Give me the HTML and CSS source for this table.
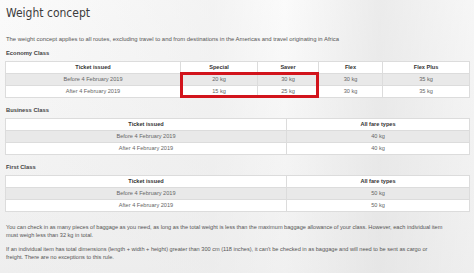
FILE: index.html
```html
<!DOCTYPE html>
<html>
<head>
<meta charset="utf-8">
<link rel="stylesheet" href="styles.css">
</head>
<body>
<div class="page">
  <h1 class="title">Weight concept</h1>
  <p class="intro">The weight concept applies to all routes, excluding travel to and from destinations in the Americas and travel originating in Africa</p>

  <div class="section-label first">Economy Class</div>
  <div class="table-wrap">
    <table class="fares economy">
      <colgroup>
        <col class="c-ticket"><col class="c-special"><col class="c-saver"><col class="c-flex"><col class="c-flexplus">
      </colgroup>
      <thead>
        <tr><th>Ticket issued</th><th>Special</th><th>Saver</th><th>Flex</th><th>Flex Plus</th></tr>
      </thead>
      <tbody>
        <tr class="alt"><td>Before 4 February 2019</td><td>20 kg</td><td>30 kg</td><td>30 kg</td><td>35 kg</td></tr>
        <tr><td>After 4 February 2019</td><td>15 kg</td><td>25 kg</td><td>30 kg</td><td>35 kg</td></tr>
      </tbody>
    </table>
    <div class="highlight"></div>
  </div>

  <div class="section-label">Business Class</div>
  <table class="fares two">
    <colgroup><col class="c-left"><col></colgroup>
    <thead><tr><th>Ticket issued</th><th>All fare types</th></tr></thead>
    <tbody>
      <tr class="alt"><td>Before 4 February 2019</td><td>40 kg</td></tr>
      <tr><td>After 4 February 2019</td><td>40 kg</td></tr>
    </tbody>
  </table>

  <div class="section-label">First Class</div>
  <table class="fares two">
    <colgroup><col class="c-left"><col></colgroup>
    <thead><tr><th>Ticket issued</th><th>All fare types</th></tr></thead>
    <tbody>
      <tr class="alt"><td>Before 4 February 2019</td><td>50 kg</td></tr>
      <tr><td>After 4 February 2019</td><td>50 kg</td></tr>
    </tbody>
  </table>

  <p class="note">You can check in as many pieces of baggage as you need, as long as the total weight is less than the maximum baggage allowance of your class. However, each individual item<br>must weigh less than 32 kg in total.</p>
  <p class="note">If an individual item has total dimensions (length + width + height) greater than 300 cm (118 inches), it can't be checked in as baggage and will need to be sent as cargo or<br>freight. There are no exceptions to this rule.</p>
</div>
</body>
</html>
```

FILE: styles.css
```css
html, body {
  margin: 0;
  padding: 0;
}
body {
  width: 474px;
  height: 273px;
  overflow: hidden;
  font-family: "Liberation Sans", Arial, sans-serif;
  color: #555;
  background:
    linear-gradient(90deg, rgba(255,255,255,0) 0%, rgba(235,235,235,0.5) 45%, rgba(250,250,250,0.2) 60%, rgba(225,225,225,0.6) 80%, rgba(240,240,240,0.4) 100%),
    linear-gradient(180deg, #fbfbfb 0%, #f4f4f4 50%, #eeeeee 100%);
}
.page {
  padding: 0 4px 0 5px;
}
.title {
  margin: 0;
  padding: 4px 0 0 1px;
  height: 22px;
  font-family: "Liberation Sans Narrow", "DejaVu Sans Condensed", "Open Sans", sans-serif;
  font-weight: 400;
  font-size: 12px;
  line-height: 18px;
  letter-spacing: 0;
  color: #3c3c3c;
}
.intro {
  margin: 9px 0 0 1px;
  font-size: 5.9px;
  line-height: 8px;
  color: #555;
}
.section-label {
  margin: 9px 0 4px 1px;
  font-size: 5.8px;
  font-weight: bold;
  line-height: 7px;
  color: #444;
}
.section-label.first {
  margin-top: 7px;
}
.table-wrap {
  position: relative;
}
.fares {
  width: 100%;
  border-collapse: collapse;
  table-layout: fixed;
  background: #fff;
  font-size: 5.6px;
  border: 1px solid #dcdcdc;
}
.fares th, .fares td {
  height: 11px;
  padding: 0;
  text-align: center;
  border: 1px solid #dcdcdc;
  line-height: 11px;
}
.fares th {
  color: #333;
  font-weight: bold;
}
.fares td {
  color: #666;
}
.fares tr.alt td {
  background: #e9e9e9;
}
.c-ticket { width: 175px; }
.c-special { width: 77px; }
.c-saver { width: 61px; }
.c-flex { width: 64px; }
.c-left { width: 281px; }
.highlight {
  position: absolute;
  left: 175px;
  top: 11px;
  width: 133px;
  height: 20px;
  border: 3px solid #d2141c;
}
.note {
  margin: 12px 0 0 1px;
  font-size: 5.6px;
  line-height: 7.5px;
  color: #555;
}
.note + .note {
  margin-top: 7px;
}
```
